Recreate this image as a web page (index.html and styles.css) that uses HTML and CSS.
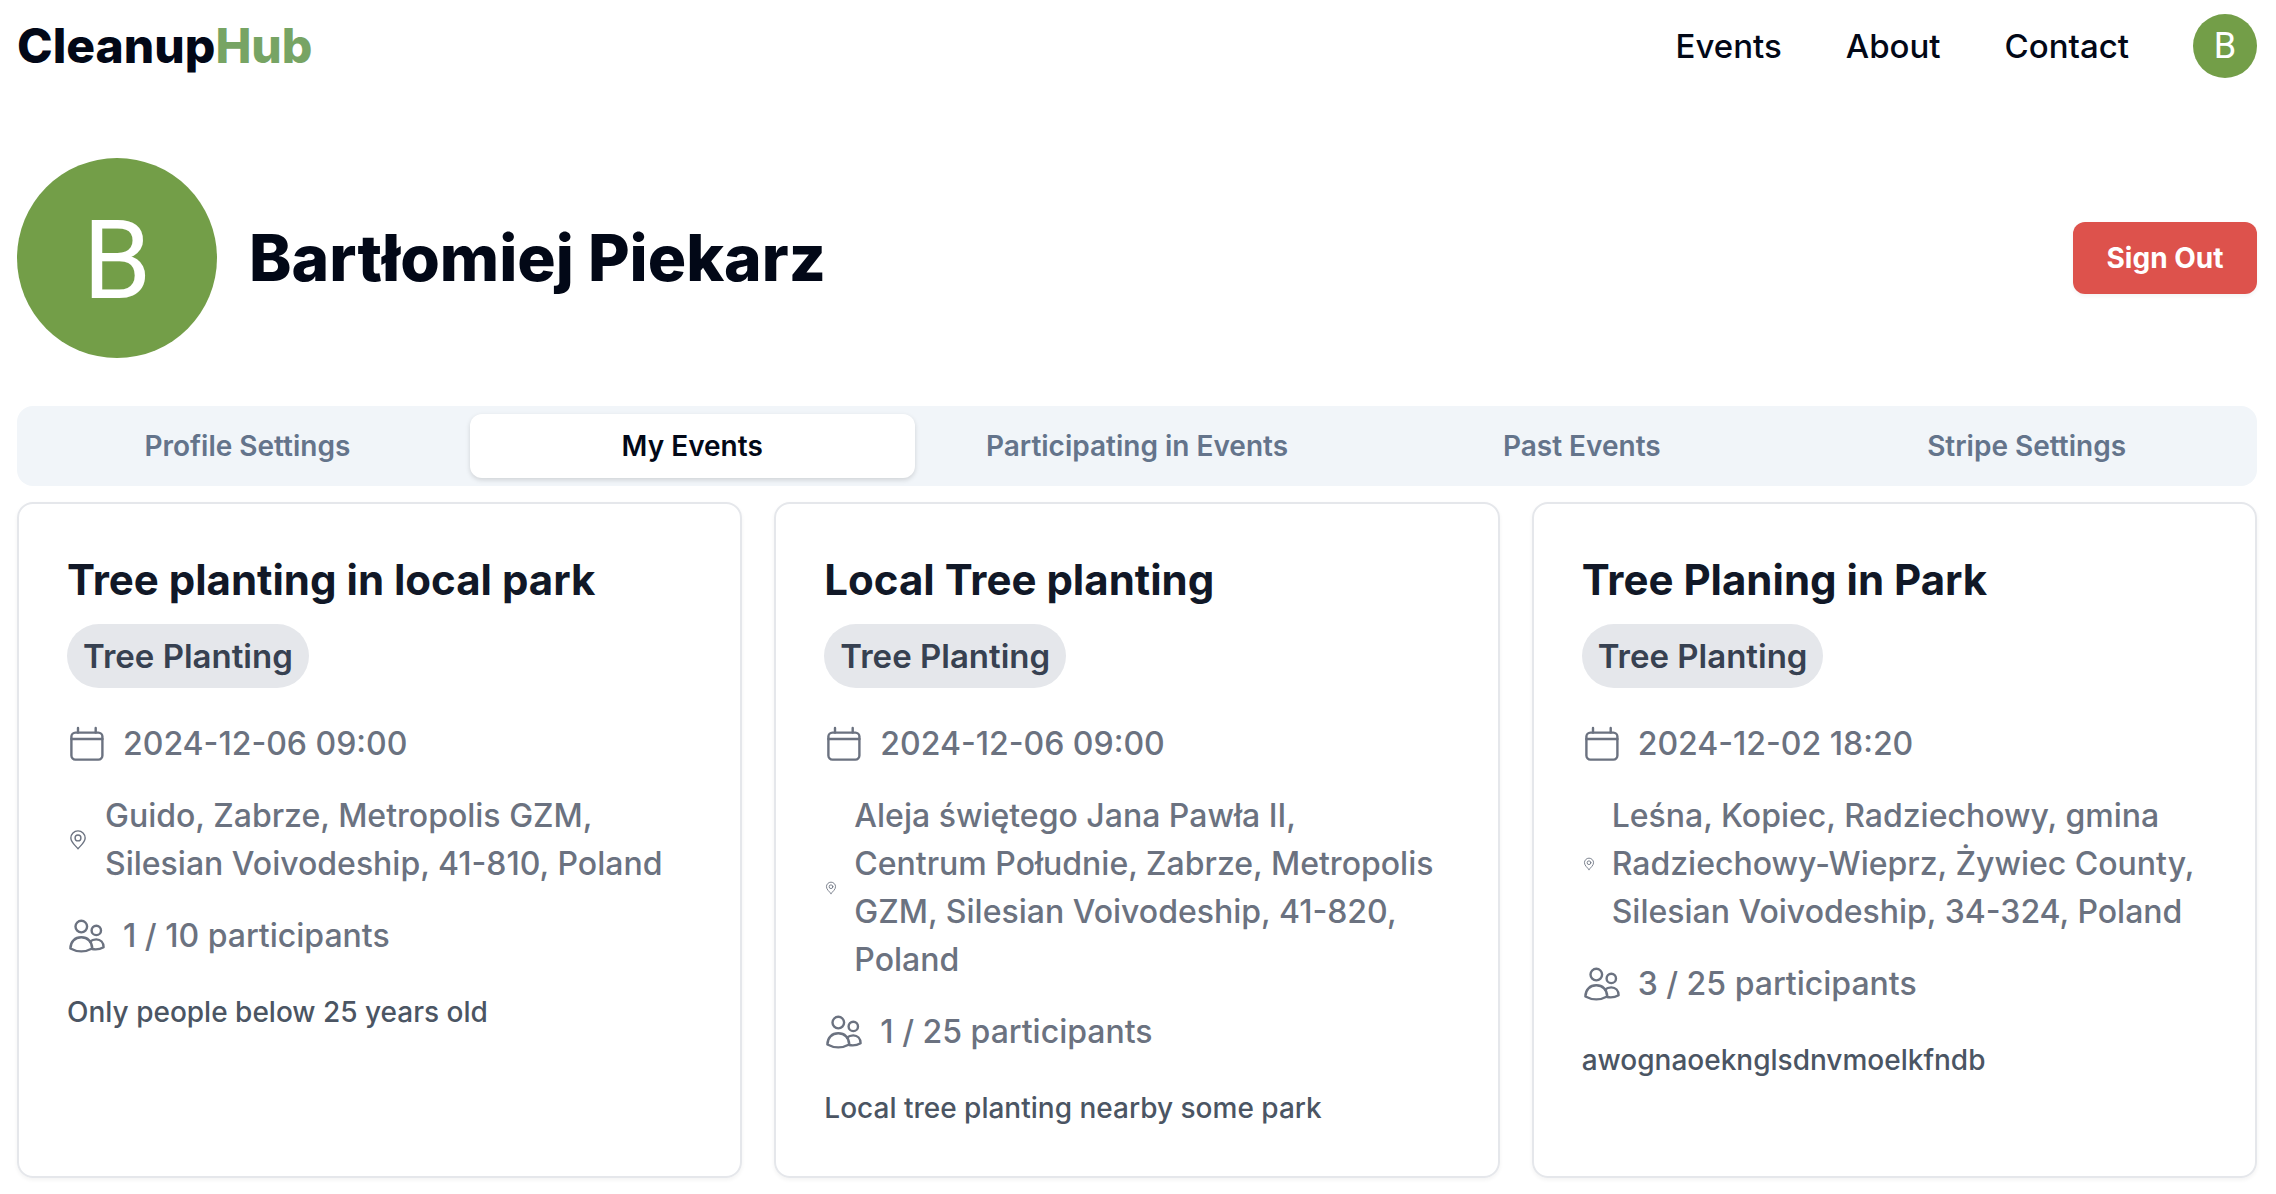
FILE: index.html
```
<!DOCTYPE html>
<html lang="en">
<head>
<meta charset="utf-8">
<title>CleanupHub</title>
<link rel="stylesheet" href="styles.css">
</head>
<body>
<svg class="sprite" aria-hidden="true">
  <symbol id="calendar" viewBox="0 0 40 40">
    <rect x="4.4" y="8.6" width="31" height="27" rx="4"/>
    <path d="M4.4 15h31M11 4v4.600M28.700 4v4.600"/>
  </symbol>
  <symbol id="pin" viewBox="0 0 24 24">
    <path d="M12 21.500C9.500 18.500 4.200 14.500 4.200 9.800a7.800 7.800 0 0 1 15.600 0C19.800 14.500 14.500 18.500 12 21.500Z"/>
    <circle cx="12" cy="9.800" r="3.200"/>
  </symbol>
  <symbol id="people" viewBox="0 0 40 40">
    <circle cx="14.300" cy="10.600" r="5.800"/>
    <circle cx="29.300" cy="14.400" r="4.700"/>
    <path d="M3.400 32.500C3.400 25.500 8 21.300 14.300 21.300S25.200 25.500 25.200 32.500C18.500 36.200 10 36.200 3.400 32.500Z"/>
    <path d="M23 25.600C24.700 24 26.900 23.400 29.300 23.400C33.500 23.400 36.600 26.500 36.600 31.300C33 33.300 29 33.800 25.200 33"/>
  </symbol>
</svg>
<div class="page">
  <header class="topbar">
    <a class="logo" href="#">Cleanup<span class="logo-accent">Hub</span></a>
    <nav class="nav">
      <a href="#">Events</a>
      <a href="#">About</a>
      <a href="#">Contact</a>
      <a class="avatar avatar-small" href="#">B</a>
    </nav>
  </header>
  <main>
    <section class="profile">
      <div class="avatar avatar-large">B</div>
      <h1 class="name">Bartłomiej Piekarz</h1>
      <button class="sign-out" type="button">Sign Out</button>
    </section>
    <div class="tabs" role="tablist">
      <button class="tab" type="button" role="tab">Profile Settings</button>
      <button class="tab tab-active" type="button" role="tab" aria-selected="true">My Events</button>
      <button class="tab" type="button" role="tab">Participating in Events</button>
      <button class="tab" type="button" role="tab">Past Events</button>
      <button class="tab" type="button" role="tab">Stripe Settings</button>
    </div>
    <div class="cards">
      <article class="card">
        <h2 class="title">Tree planting in local park</h2>
        <span class="badge">Tree Planting</span>
        <div class="details">
          <p class="detail"><svg class="icon"><use href="#calendar"/></svg><span>2024-12-06 09:00</span></p>
          <p class="detail"><svg class="icon icon-pin"><use href="#pin"/></svg><span>Guido, Zabrze, Metropolis GZM, Silesian Voivodeship, 41-810, Poland</span></p>
          <p class="detail"><svg class="icon"><use href="#people"/></svg><span>1 / 10 participants</span></p>
        </div>
        <p class="description">Only people below 25 years old</p>
      </article>
      <article class="card">
        <h2 class="title">Local Tree planting</h2>
        <span class="badge">Tree Planting</span>
        <div class="details">
          <p class="detail"><svg class="icon"><use href="#calendar"/></svg><span>2024-12-06 09:00</span></p>
          <p class="detail"><svg class="icon icon-pin icon-tiny"><use href="#pin"/></svg><span>Aleja świętego Jana Pawła II,<br>Centrum Południe, Zabrze, Metropolis GZM, Silesian Voivodeship, 41-820, Poland</span></p>
          <p class="detail"><svg class="icon"><use href="#people"/></svg><span>1 / 25 participants</span></p>
        </div>
        <p class="description">Local tree planting nearby some park</p>
      </article>
      <article class="card">
        <h2 class="title">Tree Planing in Park</h2>
        <span class="badge">Tree Planting</span>
        <div class="details">
          <p class="detail"><svg class="icon"><use href="#calendar"/></svg><span>2024-12-02 18:20</span></p>
          <p class="detail"><svg class="icon icon-pin icon-tiny"><use href="#pin"/></svg><span>Leśna, Kopiec, Radziechowy, gmina Radziechowy-Wieprz, Żywiec County, Silesian Voivodeship, 34-324, Poland</span></p>
          <p class="detail"><svg class="icon"><use href="#people"/></svg><span>3 / 25 participants</span></p>
        </div>
        <p class="description">awognaoeknglsdnvmoelkfndb</p>
      </article>
    </div>
  </main>
</div>
</body>
</html>
```
FILE: styles.css
```
* { box-sizing: border-box; }
body {
  margin: 0;
  background: #fff;
  color: #020817;
  font-family: Inter, "Noto Sans", sans-serif;
  font-size: 32px;
  line-height: 48px;
}
h1, h2, p { margin: 0; }
a { color: inherit; text-decoration: none; }
button { border: 0; font: inherit; cursor: pointer; }
.sprite { display: none; }
.page { padding: 14px 19px 16px 17px; }
.topbar { display: flex; align-items: center; justify-content: space-between; }
.logo { font-size: 48px; font-weight: 800; }
.logo-accent { color: #77a464; }
.nav { display: flex; align-items: center; gap: 64px; font-size: 33px; font-weight: 500; }
.avatar {
  display: flex;
  align-items: center;
  justify-content: center;
  border-radius: 50%;
  background: #739e48;
  color: #fff;
  font-family: Roboto, sans-serif;
  font-weight: 400;
}
.avatar-small { width: 64px; height: 64px; font-size: 36px; }
.avatar-large { width: 200px; height: 200px; padding-top: 6px; font-size: 110px; }
.profile { display: flex; align-items: center; gap: 32px; margin: 80px 0 48px; }
.name { font-size: 64px; line-height: 72px; font-weight: 800; }
.sign-out {
  min-width: 184px;
  margin-left: auto;
  padding: 16px 24px;
  border-radius: 12px;
  background: #dd524c;
  color: #fff;
  font-size: 28px;
  line-height: 40px;
  font-weight: 700;
  box-shadow: 0 2px 4px rgba(0, 0, 0, 0.05);
}
.tabs {
  display: grid;
  grid-template-columns: repeat(5, 1fr);
  padding: 8px;
  border-radius: 16px;
  background: #f1f5f9;
}
.tab {
  padding: 12px 24px;
  border-radius: 12px;
  background: none;
  color: #64748b;
  font-size: 28px;
  line-height: 40px;
  font-weight: 600;
}
.tab-active { background: #fff; color: #020817; box-shadow: 0 2px 5px rgba(0, 0, 0, 0.14); }
.cards {
  display: grid;
  grid-template-columns: repeat(3, 1fr);
  gap: 32px;
  margin-top: 16px;
}
.card {
  padding: 48px;
  border: 2px solid #e5e7eb;
  border-radius: 16px;
  box-shadow: 0 2px 4px rgba(0, 0, 0, 0.05);
}
.title { margin-bottom: 16px; color: #111827; font-size: 42px; line-height: 56px; font-weight: 700; }
.badge {
  display: block;
  width: fit-content;
  padding: 8px 16px;
  border-radius: 32px;
  background: #e5e7eb;
  color: #374151;
  font-size: 33px;
  font-weight: 600;
}
.details { display: grid; gap: 24px; margin: 32px 0; color: #6b7280; font-weight: 500; }
.detail { display: flex; align-items: center; gap: 16px; }
.icon {
  flex: none;
  width: 40px;
  height: 40px;
  fill: none;
  stroke: currentColor;
  stroke-width: 2.4;
  stroke-linecap: round;
  stroke-linejoin: round;
}
.icon-pin { width: 22px; height: 22px; stroke-width: 1.5; }
.icon-tiny { width: 14px; height: 14px; }
.description { color: #4b5563; font-size: 28px; line-height: 40px; font-weight: 500; }
```
